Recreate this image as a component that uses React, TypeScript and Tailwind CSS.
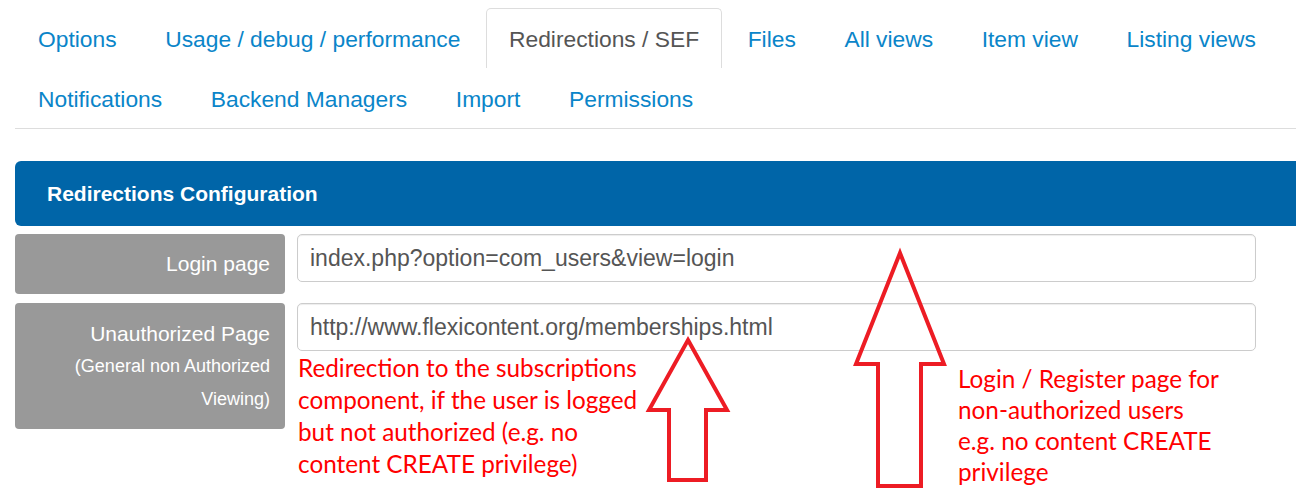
import React from "react";

const tabsRow = [
  "Options",
  "Usage / debug / performance",
  "Redirections / SEF",
  "Files",
  "All views",
  "Item view",
  "Listing views",
  "Notifications",
  "Backend Managers",
  "Import",
  "Permissions",
];

export default function App() {
  return (
    <div className="relative w-[1296px] h-[488px] overflow-hidden bg-white font-['Liberation_Sans',Arial,sans-serif]">
      <div className="w-[1340px] pl-[15px]">
        <ul className="flex flex-wrap pt-[8px] border-b border-[#dddddd]">
          {tabsRow.map((t) => {
            const active = t === "Redirections / SEF";
            return (
              <li
                key={t}
                className={
                  active
                    ? "h-[60px] px-[22px] pt-[2px] mr-[2.6px] flex items-center text-[22.8px] text-[#555555] bg-white border border-b-0 border-[#dddddd] rounded-t-[5px]"
                    : "h-[60px] px-[22px] pt-[2px] mr-[2.6px] flex items-center text-[22.8px] text-[#0a85c9] border border-transparent"
                }
              >
                {t}
              </li>
            );
          })}
        </ul>

        <div className="mt-[32px] h-[65px] bg-[#0065a8] rounded-l-[6px] flex items-center pl-[32px]">
          <span className="text-white font-bold text-[21px]">Redirections Configuration</span>
        </div>

        <div className="mt-[8px] flex items-start gap-[12px]">
          <div className="w-[270px] h-[60px] bg-[#999999] rounded-[4px] flex items-center justify-end pr-[15px] text-white text-[21px]">
            Login page
          </div>
          <div className="w-[959px] h-[48px] border border-[#cccccc] rounded-[5px] px-[12px] flex items-center text-[23px] text-[#555555] shadow-[inset_0_1px_1px_rgba(0,0,0,0.075)]">
            index.php?option=com_users&amp;view=login
          </div>
        </div>

        <div className="mt-[9px] flex items-start gap-[12px]">
          <div className="w-[270px] h-[126px] bg-[#999999] rounded-[4px] flex flex-col items-end pt-[14px] pr-[15px] text-white">
            <span className="text-[21px] leading-[33px]">Unauthorized Page</span>
            <span className="text-[18px] leading-[33px]">(General non Authorized</span>
            <span className="text-[18px] leading-[33px]">Viewing)</span>
          </div>
          <div className="w-[959px] flex flex-col">
            <div className="h-[48px] border border-[#cccccc] rounded-[5px] px-[12px] flex items-center text-[23px] text-[#555555] shadow-[inset_0_1px_1px_rgba(0,0,0,0.075)]">
              http://www.flexicontent.org/memberships.html
            </div>
            <p className="mt-[1px] pl-[1px] font-['Lato',sans-serif] text-[24.3px] leading-[32px] text-[#ff0000]">
              Redirection to the subscriptions
              <br />
              component, if the user is logged
              <br />
              but not authorized (e.g. no
              <br />
              content CREATE privilege)
            </p>
          </div>
        </div>
      </div>

      <svg
        className="absolute left-0 top-0 pointer-events-none"
        width="1296"
        height="488"
        viewBox="0 0 1296 488"
      >
        <polygon
          points="688,340 727,410 706,410 706,480 669,480 669,410 649,410"
          fill="none"
          stroke="#ed1c24"
          strokeWidth="4"
          strokeLinejoin="miter"
        />
        <polygon
          points="900,253 944,364 921,364 921,486 878,486 878,364 856,364"
          fill="none"
          stroke="#ed1c24"
          strokeWidth="4"
          strokeLinejoin="miter"
        />
      </svg>

      <p className="absolute left-[958px] top-[363px] font-['Lato',sans-serif] text-[24.3px] leading-[31px] text-[#ff0000]">
        Login / Register page for
        <br />
        non-authorized users
        <br />
        e.g. no content CREATE
        <br />
        privilege
      </p>
    </div>
  );
}
